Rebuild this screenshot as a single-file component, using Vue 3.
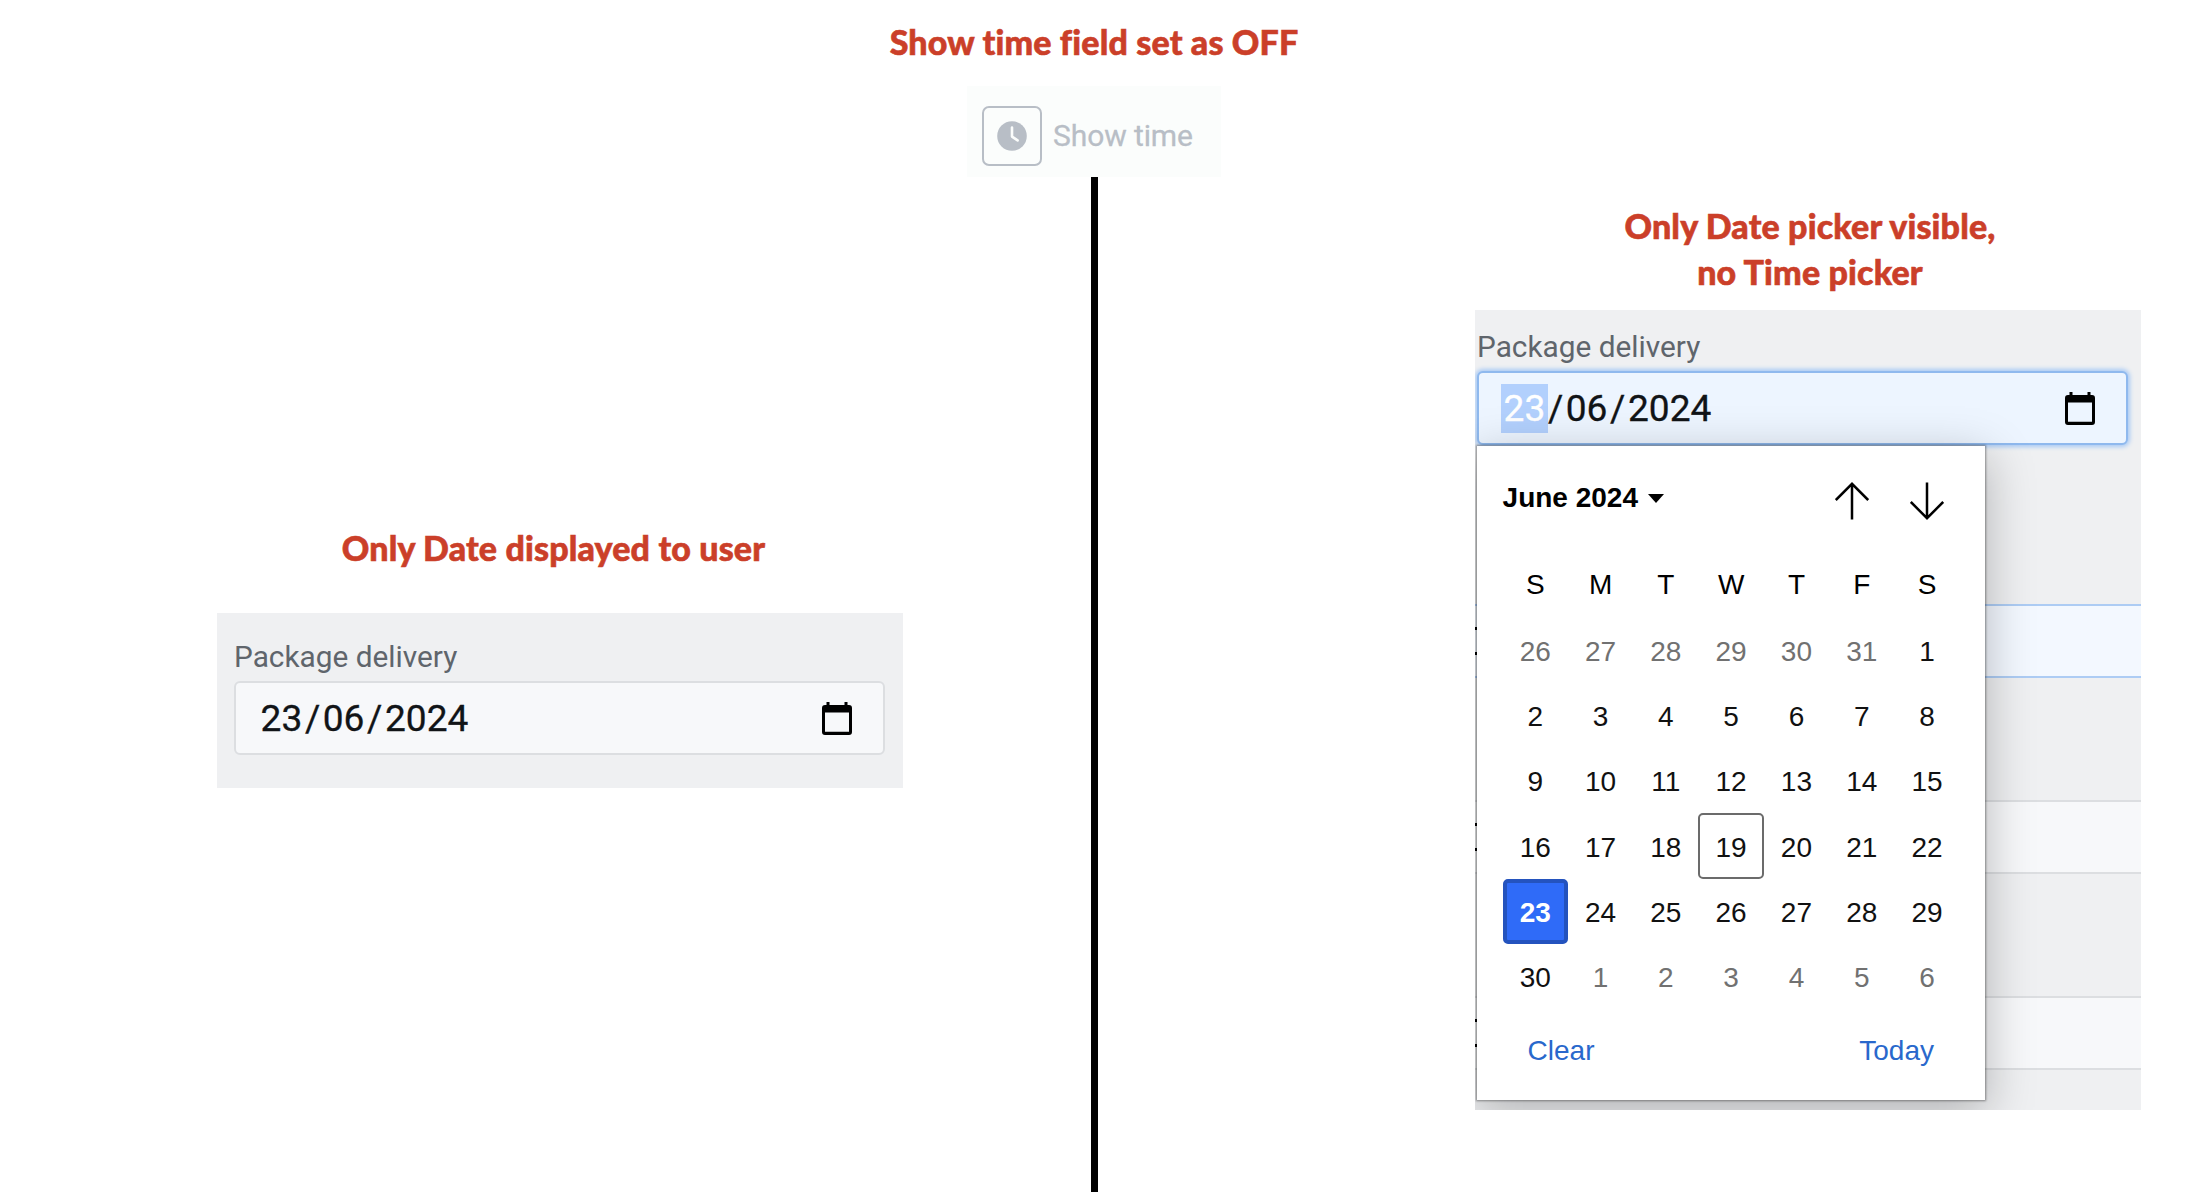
<script setup>
const weekdays = ['S', 'M', 'T', 'W', 'T', 'F', 'S']
const days = Array.from({ length: 42 }, (_, i) => {
  if (i < 6) return { n: 26 + i, out: true }
  if (i > 35) return { n: i - 35, out: true }
  const n = i - 5
  return { n, out: false, today: n === 19, selected: n === 23 }
})
</script>

<template>
  <div class="page">
    <header class="top">
      <h1 class="note"><span>Show time field set as OFF</span></h1>
      <div class="toggle">
        <div class="toggle-box">
          <svg width="30" height="30" viewBox="0 0 30 30">
            <circle cx="15" cy="15" r="14.8" fill="#b8bec6" />
            <path d="M15 6.5V15.6L20.6 19.4" fill="none" stroke="#fbfdfc" stroke-width="2.6" stroke-linecap="round" stroke-linejoin="round" />
          </svg>
        </div>
        <span class="toggle-label">Show time</span>
      </div>
    </header>

    <main class="columns">
      <section class="left">
        <h2 class="note"><span>Only Date displayed to user</span></h2>
        <div class="panel">
          <div class="label">Package delivery</div>
          <div class="field">
            <div class="date"><span>23</span>/<span>06</span>/<span>2024</span></div>
            <svg class="cal" width="30" height="33" viewBox="0 0 30 33">
              <path fill-rule="evenodd" d="M4.500 0h3v3h15V0h3v3H27a3 3 0 0 1 3 3V30a3 3 0 0 1-3 3H3a3 3 0 0 1-3-3V6a3 3 0 0 1 3-3h1.500zM3 10.500v19.300h24V10.500z" />
            </svg>
          </div>
        </div>
      </section>

      <div class="divider"></div>

      <section class="right">
        <h2 class="note"><span>Only Date picker visible,</span><span>no Time picker</span></h2>
        <div class="screen">
          <div class="label">Package delivery</div>
          <div class="field focus">
            <div class="date"><span class="sel">23</span>/<span>06</span>/<span>2024</span></div>
            <svg class="cal" width="30" height="33" viewBox="0 0 30 33">
              <path fill-rule="evenodd" d="M4.500 0h3v3h15V0h3v3H27a3 3 0 0 1 3 3V30a3 3 0 0 1-3 3H3a3 3 0 0 1-3-3V6a3 3 0 0 1 3-3h1.500zM3 10.500v19.300h24V10.500z" />
            </svg>
          </div>
          <div class="row blue"><i></i><i></i></div>
          <div class="row"><i></i><i></i></div>
          <div class="row"><i></i><i></i></div>

          <div class="popup">
            <div class="head">
              <div class="month">June 2024</div>
              <svg class="tri" width="16" height="9" viewBox="0 0 16 9"><path d="M0 0h16L8 9z" /></svg>
              <svg class="arrow up" width="34" height="38" viewBox="0 0 34 38"><path d="M17 37.500V1.500M.8 18L17 1.800 33.200 18" /></svg>
              <svg class="arrow" width="34" height="38" viewBox="0 0 34 38"><path d="M17 .5V36M.8 20L17 36.200 33.200 20" /></svg>
            </div>
            <div class="grid week">
              <div v-for="(w, i) in weekdays" :key="i" class="cell">{{ w }}</div>
            </div>
            <div class="grid">
              <div v-for="(d, i) in days" :key="i" class="cell" :class="{ out: d.out, today: d.today, selected: d.selected }">{{ d.n }}</div>
            </div>
            <div class="foot"><span>Clear</span><span>Today</span></div>
          </div>
        </div>
      </section>
    </main>
  </div>
</template>

<style>
body {
  background: #fff;
}
</style>

<style scoped>
.page {
  width: 2190px;
  height: 1192px;
  overflow: hidden;
  display: flex;
  flex-direction: column;
  background: #fff;
  font-family: Roboto, "Liberation Sans", sans-serif;
}
.top {
  height: 177px;
  box-sizing: border-box;
  padding-top: 19px;
  width: 2188px;
  display: flex;
  flex-direction: column;
  align-items: center;
}
.note {
  margin: 0;
  font: 900 34px/46px Lato, sans-serif;
  font-variant-ligatures: none;
  letter-spacing: 0.15px;
  -webkit-text-stroke: 0.6px #cb3f29;
  color: #cb3f29;
  white-space: nowrap;
  display: flex;
  flex-direction: column;
  align-items: center;
}
.toggle {
  margin-top: 21px;
  width: 254px;
  height: 91px;
  box-sizing: border-box;
  padding: 8px 0 0 15px;
  display: flex;
  align-items: center;
  gap: 11px;
  background: #fbfdfc;
}
.toggle-box {
  width: 60px;
  height: 60px;
  box-sizing: border-box;
  border: 2px solid #b8bec6;
  border-radius: 7px;
  display: flex;
  align-items: center;
  justify-content: center;
}
.toggle-label {
  font-size: 30px;
  letter-spacing: -0.1px;
  color: #b8bec6;
  -webkit-text-stroke: 0.3px #b8bec6;
  white-space: nowrap;
}
.columns {
  flex: 1;
  display: flex;
}
.divider {
  width: 7px;
  background: #000;
}
.left {
  width: 1091px;
  box-sizing: border-box;
  padding: 348px 0 0 217px;
}
.left .note {
  width: 673px;
}
.panel {
  margin-top: 42px;
  width: 686px;
  height: 175px;
  box-sizing: border-box;
  padding: 26px 18px 0 17px;
  background: #eff0f2;
}
.label {
  height: 42px;
  line-height: 36px;
  font-size: 29.8px;
  color: #5f656c;
  white-space: nowrap;
}
.field {
  height: 74px;
  box-sizing: border-box;
  border: 2px solid #dcdee1;
  border-radius: 6px;
  background: #f7f8fa;
  padding: 0 31px 0 22px;
  display: flex;
  align-items: center;
  justify-content: space-between;
}
.date {
  display: flex;
  font-size: 37.1px;
  line-height: 49px;
  color: #111417;
  -webkit-text-stroke: 0.3px currentColor;
}
.date span {
  padding: 0 2.6px;
}
.date .sel {
  background: #b2d0fd;
  color: #fff;
}
.right {
  flex: 1;
  padding: 26px 0 0 377px;
}
.right .note {
  width: 670px;
}
.screen {
  position: relative;
  margin-top: 15px;
  width: 666px;
  height: 800px;
  overflow: hidden;
  background: #eff0f2;
}
.screen .label {
  padding: 19px 0 0 2px;
}
.screen .field {
  margin-left: 2px;
  width: 651px;
}
.field.focus {
  border-color: #8fb9ee;
  background: #edf5ff;
  box-shadow: 0 0 4px 2px #a9caf5;
}
.row {
  height: 74px;
  box-sizing: border-box;
  margin-top: 122px;
  background: #f7f8fa;
  border-top: 2px solid #dcdee1;
  border-bottom: 2px solid #dcdee1;
  display: flex;
  flex-direction: column;
  justify-content: center;
  gap: 22px;
}
.row i {
  width: 2px;
  height: 3px;
  background: #000;
}
.row.blue {
  margin-top: 159px;
  background: #f3f8ff;
  border-color: #adccf4;
}
.popup {
  position: absolute;
  left: 2px;
  top: 136px;
  width: 508px;
  height: 654px;
  box-sizing: border-box;
  padding: 28px 0 0 25.6px;
  background: #fff;
  box-shadow: 0 0 2px 1px rgba(0, 0, 0, 0.38), 0 12px 44px 2px rgba(0, 0, 0, 0.25);
  font-family: "Liberation Sans", Arial, sans-serif;
  font-size: 28px;
  color: #111;
}
.head {
  display: flex;
  align-items: center;
  height: 54px;
  padding-right: 41px;
}
.month {
  font-weight: 700;
  font-size: 28px;
  color: #000;
  line-height: 32px;
  margin-top: -6px;
}
.tri {
  margin: -5px 0 0 10px;
}
.arrow {
  fill: none;
  stroke: #000;
  stroke-width: 2.5;
}
.arrow.up {
  margin-left: auto;
  margin-right: 41px;
}
.grid {
  display: grid;
  grid-template-columns: repeat(7, 65.3px);
  grid-auto-rows: 65.3px;
}
.week {
  height: 67px;
  margin-top: 22.6px;
  color: #000;
}
.cell {
  display: flex;
  align-items: center;
  justify-content: center;
  box-sizing: border-box;
  border-radius: 5px;
  padding-top: 3px;
}
.out {
  color: #717171;
}
.today {
  border: 2px solid #6b6b6b;
}
.selected {
  border: 4px solid #2453be;
  background: #2f6bf8;
  color: #fff;
  font-weight: 700;
}
.foot {
  display: flex;
  justify-content: space-between;
  padding: 25px 51px 0 25px;
  line-height: 34px;
  color: #2968cc;
}
</style>
